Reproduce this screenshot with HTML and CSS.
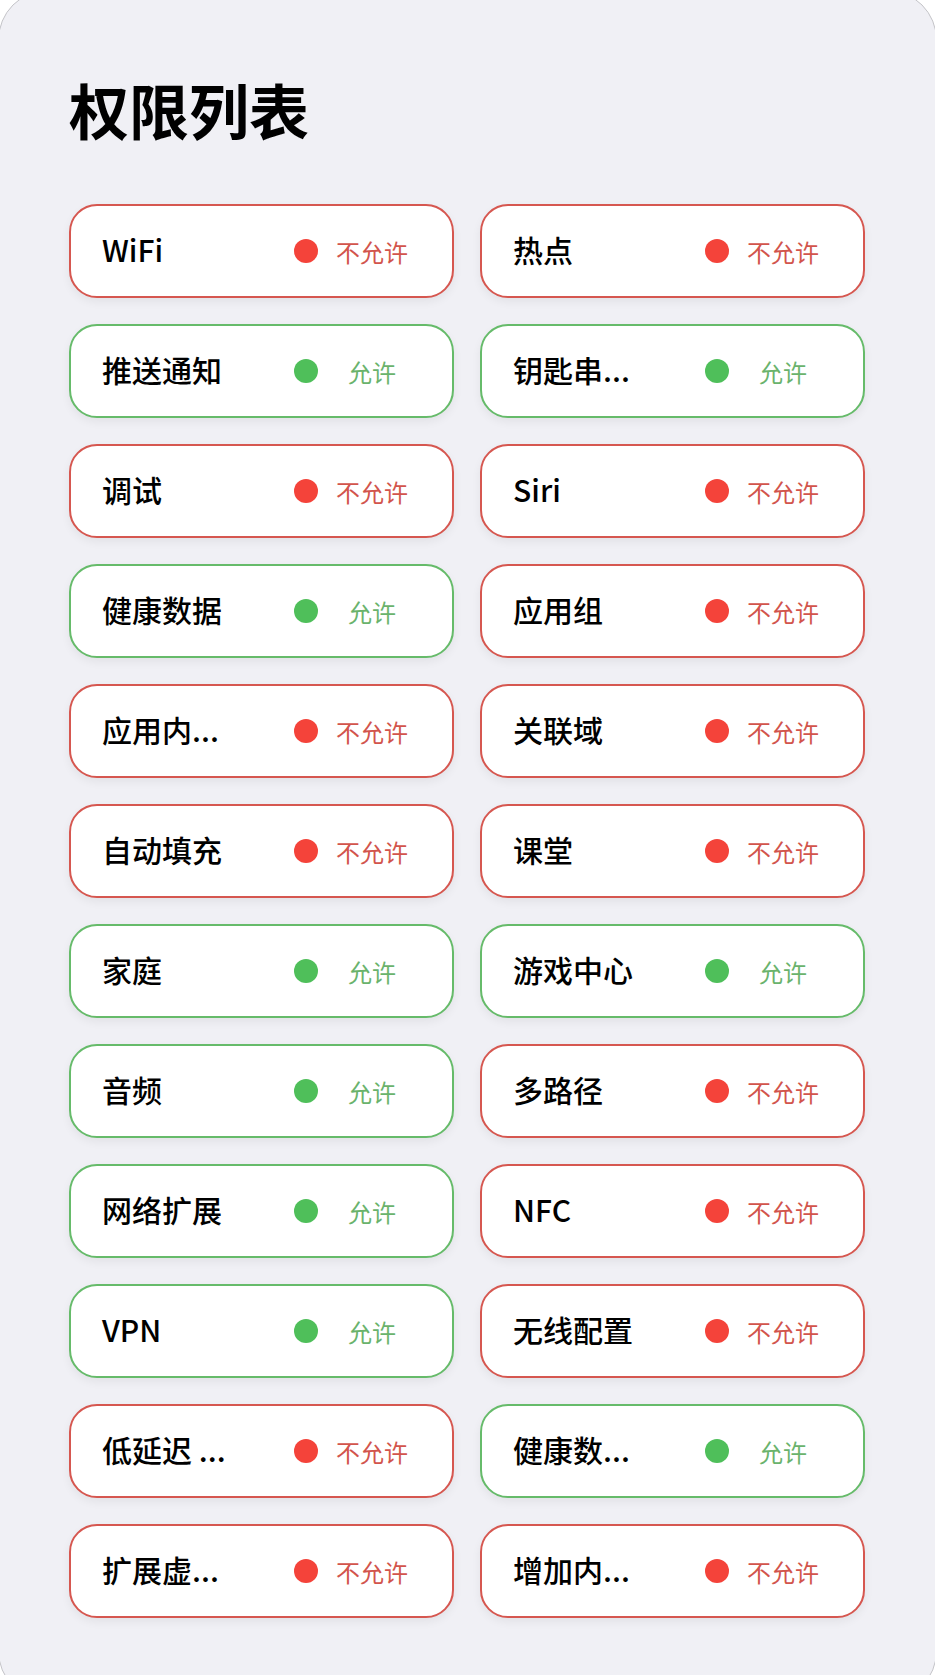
FILE: index.html
```html
<!DOCTYPE html>
<html lang="zh-CN">
<head>
    <meta charset="UTF-8">
    <meta name="viewport" content="width=device-width, initial-scale=1.0">
    <title>权限列表</title>
    <link rel="stylesheet" href="styles.css">
</head>
<body>
    <div class="panel">
        <h1>权限列表</h1>
        <div class="grid">
            <div class="card deny"><span class="name">WiFi</span><span class="dot"></span><span class="state">不允许</span></div>
            <div class="card deny"><span class="name">热点</span><span class="dot"></span><span class="state">不允许</span></div>

            <div class="card allow"><span class="name">推送通知</span><span class="dot"></span><span class="state">允许</span></div>
            <div class="card allow"><span class="name">钥匙串...</span><span class="dot"></span><span class="state">允许</span></div>

            <div class="card deny"><span class="name">调试</span><span class="dot"></span><span class="state">不允许</span></div>
            <div class="card deny"><span class="name">Siri</span><span class="dot"></span><span class="state">不允许</span></div>

            <div class="card allow"><span class="name">健康数据</span><span class="dot"></span><span class="state">允许</span></div>
            <div class="card deny"><span class="name">应用组</span><span class="dot"></span><span class="state">不允许</span></div>

            <div class="card deny"><span class="name">应用内...</span><span class="dot"></span><span class="state">不允许</span></div>
            <div class="card deny"><span class="name">关联域</span><span class="dot"></span><span class="state">不允许</span></div>

            <div class="card deny"><span class="name">自动填充</span><span class="dot"></span><span class="state">不允许</span></div>
            <div class="card deny"><span class="name">课堂</span><span class="dot"></span><span class="state">不允许</span></div>

            <div class="card allow"><span class="name">家庭</span><span class="dot"></span><span class="state">允许</span></div>
            <div class="card allow"><span class="name">游戏中心</span><span class="dot"></span><span class="state">允许</span></div>

            <div class="card allow"><span class="name">音频</span><span class="dot"></span><span class="state">允许</span></div>
            <div class="card deny"><span class="name">多路径</span><span class="dot"></span><span class="state">不允许</span></div>

            <div class="card allow"><span class="name">网络扩展</span><span class="dot"></span><span class="state">允许</span></div>
            <div class="card deny"><span class="name">NFC</span><span class="dot"></span><span class="state">不允许</span></div>

            <div class="card allow"><span class="name">VPN</span><span class="dot"></span><span class="state">允许</span></div>
            <div class="card deny"><span class="name">无线配置</span><span class="dot"></span><span class="state">不允许</span></div>

            <div class="card deny"><span class="name">低延迟 ...</span><span class="dot"></span><span class="state">不允许</span></div>
            <div class="card allow"><span class="name">健康数...</span><span class="dot"></span><span class="state">允许</span></div>

            <div class="card deny"><span class="name">扩展虚...</span><span class="dot"></span><span class="state">不允许</span></div>
            <div class="card deny"><span class="name">增加内...</span><span class="dot"></span><span class="state">不允许</span></div>
        </div>
    </div>
</body>
</html>
```

FILE: styles.css
```css
html, body {
    margin: 0;
    padding: 0;
    background-color: #ffffff;
    overflow: hidden;
}
body {
    font-family: "Noto Sans CJK SC", "Noto Sans", sans-serif;
    color: #000000;
}
.panel {
    margin: -10px -2px 0;
    height: 1711px;
    box-sizing: border-box;
    padding: 82px 71px 0 70px;
    background-color: #f0f0f5;
    border: 1.5px solid #c4c4c8;
    border-radius: 50px;
}
h1 {
    margin: 0 0 59px;
    font-size: 60px;
    line-height: 72px;
    font-weight: 700;
}
.grid {
    display: grid;
    grid-template-columns: 385px 385px;
    column-gap: 26px;
    row-gap: 26px;
}
.card {
    display: flex;
    align-items: center;
    height: 94px;
    box-sizing: border-box;
    padding: 0 40px 0 31px;
    background-color: #ffffff;
    border: 2.5px solid;
    border-radius: 28px;
    box-shadow: 0 4px 10px rgba(0, 0, 0, 0.06);
}
.card.deny {
    border-color: #d65750;
}
.card.allow {
    border-color: #66bb6a;
}
.name {
    flex: 1;
    font-size: 30px;
    font-weight: 500;
    white-space: nowrap;
    margin-top: -4px;
}
.dot {
    width: 24px;
    height: 24px;
    border-radius: 50%;
}
.deny .dot {
    background-color: #f4433a;
}
.allow .dot {
    background-color: #4fbf5a;
}
.state {
    width: 80px;
    margin-left: 14px;
    text-align: center;
    font-size: 24px;
    font-weight: 400;
}
.deny .state {
    color: #d2544c;
}
.allow .state {
    color: #6ab36c;
}
```
